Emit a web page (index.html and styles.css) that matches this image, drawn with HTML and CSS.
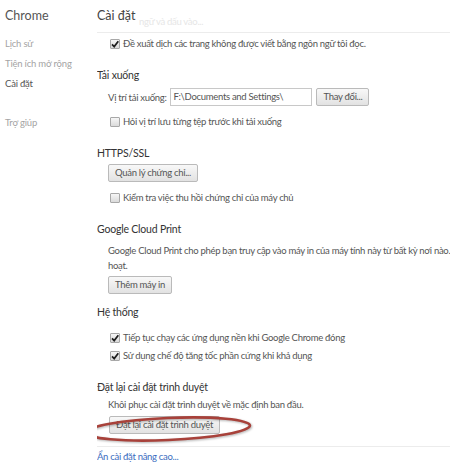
FILE: index.html
```html
<!DOCTYPE html>
<html lang="vi">
<head>
    <meta charset="UTF-8">
    <meta name="viewport" content="width=device-width, initial-scale=1.0">
    <title>Cài đặt</title>
    <link rel="stylesheet" href="styles.css">
</head>
<body>
    <div class="page">
        <nav class="sidebar">
            <h1 class="brand">Chrome</h1>
            <ul class="nav-list">
                <li>Lịch sử</li>
                <li>Tiện ích mở rộng</li>
                <li class="active">Cài đặt</li>
                <li class="nav-help">Trợ giúp</li>
            </ul>
        </nav>
        <main class="main">
            <header class="main-header">
                <span class="ghost">ngữ và dấu vào...</span>
                <h2 class="title">Cài đặt</h2>
            </header>
            <div class="content">
                <div class="indent">
                    <label class="check-row first-row">
                        <span class="box checked"><svg viewBox="0 0 10 10"><path d="M2 5.3 L4.2 7.6 L8.3 2.2"/></svg></span>
                        Đề xuất dịch các trang không được viết bằng ngôn ngữ tôi đọc.
                    </label>
                </div>

                <section class="section">
                    <h3>Tải xuống</h3>
                    <div class="indent">
                        <div class="location-row">
                            <span>Vị trí tải xuống:</span>
                            <div class="path-input">F:\Documents and Settings\</div>
                            <button type="button" class="btn">Thay đổi...</button>
                        </div>
                        <label class="check-row spaced">
                            <span class="box"></span>
                            Hỏi vị trí lưu từng tệp trước khi tải xuống
                        </label>
                    </div>
                </section>

                <section class="section">
                    <h3>HTTPS/SSL</h3>
                    <div class="indent">
                        <button type="button" class="btn btn-top">Quản lý chứng chỉ...</button>
                        <label class="check-row spaced">
                            <span class="box"></span>
                            Kiểm tra việc thu hồi chứng chỉ của máy chủ
                        </label>
                    </div>
                </section>

                <section class="section">
                    <h3>Google Cloud Print</h3>
                    <div class="indent">
                        <p class="desc">Google Cloud Print cho phép bạn truy cập vào máy in của máy tính này từ bất kỳ nơi nào.<br>hoạt.</p>
                        <button type="button" class="btn btn-after-text">Thêm máy in</button>
                    </div>
                </section>

                <section class="section section-after-btn">
                    <h3>Hệ thống</h3>
                    <div class="indent">
                        <label class="check-row system-first">
                            <span class="box checked"><svg viewBox="0 0 10 10"><path d="M2 5.3 L4.2 7.6 L8.3 2.2"/></svg></span>
                            Tiếp tục chạy các ứng dụng nền khi Google Chrome đóng
                        </label>
                        <label class="check-row tight">
                            <span class="box checked"><svg viewBox="0 0 10 10"><path d="M2 5.3 L4.2 7.6 L8.3 2.2"/></svg></span>
                            Sử dụng chế độ tăng tốc phần cứng khi khả dụng
                        </label>
                    </div>
                </section>

                <section class="section reset">
                    <h3>Đặt lại cài đặt trình duyệt</h3>
                    <div class="indent">
                        <p class="reset-text">Khôi phục cài đặt trình duyệt về mặc định ban đầu.</p>
                        <button type="button" class="btn btn-reset">Đặt lại cài đặt trình duyệt</button>
                    </div>
                    <svg class="circle-mark" viewBox="0 0 186 34">
                        <ellipse cx="93" cy="17" rx="82" ry="11" transform="rotate(-2.5 93 17)"/>
                    </svg>
                </section>

                <div class="footer">
                    <a href="#" class="more-link">Ẩn cài đặt nâng cao...</a>
                </div>
            </div>
        </main>
    </div>
</body>
</html>
```

FILE: styles.css
```css
body {
    margin: 0;
    background: #fff;
    color: #555;
    font-family: Lato, "Liberation Sans", sans-serif;
    font-size: 9.5px;
    letter-spacing: -0.3px;
    overflow: hidden;
}
.page {
    display: flex;
    width: 450px;
    height: 465px;
    overflow: hidden;
}
.sidebar {
    width: 92px;
    flex-shrink: 0;
    padding-left: 5px;
}
.brand {
    margin: 0;
    font-weight: normal;
    font-size: 12.5px;
    letter-spacing: 0;
    line-height: 32px;
    color: #555;
}
.nav-list {
    list-style: none;
    margin: 2px 0 0;
    padding: 0;
}
.nav-list li {
    font-size: 9.5px;
    letter-spacing: -0.2px;
    line-height: 20px;
    color: #a4a4a4;
}
.nav-list li.active {
    color: #555;
}
.nav-list li.nav-help {
    margin-top: 19px;
}
.main {
    flex: 1;
    min-width: 0;
    overflow: hidden;
}
.main-header {
    position: relative;
    height: 32px;
    border-bottom: 1px solid #ececec;
}
.title {
    position: relative;
    margin: 0;
    font-weight: normal;
    font-size: 12.5px;
    letter-spacing: 0;
    line-height: 32px;
    color: #444;
}
.ghost {
    position: absolute;
    left: 42px;
    top: 16px;
    color: #e6e6e6;
    white-space: nowrap;
}
.indent {
    padding-left: 11px;
}
.check-row {
    display: flex;
    align-items: center;
    gap: 3px;
    line-height: 15px;
    white-space: nowrap;
}
.first-row {
    padding-top: 3px;
}
.check-row.spaced {
    margin-top: 8px;
}
.check-row.system-first {
    margin-top: 9px;
}
.check-row.tight {
    margin-top: 3px;
}
.box {
    box-sizing: border-box;
    width: 10px;
    height: 10px;
    margin-left: 2px;
    border: 1px solid #a8a8a8;
    border-radius: 1px;
    background: linear-gradient(#f6f6f6, #dadada);
    display: flex;
}
.box svg {
    width: 10px;
    height: 10px;
    margin: -1px;
    fill: none;
    stroke: #1e1e1e;
    stroke-width: 1.7;
}
.section {
    margin-top: 15px;
}
.section-after-btn {
    margin-top: 9px;
}
.section h3 {
    margin: 0;
    font-weight: normal;
    font-size: 10.5px;
    letter-spacing: -0.2px;
    line-height: 18px;
    color: #333;
}
.location-row {
    display: flex;
    align-items: center;
    gap: 4px;
    margin-top: 4px;
    height: 18px;
}
.path-input {
    box-sizing: border-box;
    width: 142px;
    height: 18px;
    line-height: 16px;
    padding-left: 2px;
    border: 1px solid #c8c8c8;
    background: #fff;
    color: #555;
    white-space: nowrap;
}
.btn {
    display: block;
    box-sizing: border-box;
    height: 18px;
    padding: 0 6px;
    border: 1px solid #bababa;
    border-radius: 2px;
    background: linear-gradient(#f8f8f8, #e2e2e2);
    color: #555;
    font-family: inherit;
    font-size: 9.5px;
    letter-spacing: -0.3px;
    line-height: 16px;
    white-space: nowrap;
}
.location-row .btn {
    display: inline-block;
}
.btn-top {
    margin-top: 2px;
}
.desc {
    margin: 5px 0 0;
    line-height: 15px;
    white-space: nowrap;
}
.btn-after-text {
    margin-top: 3px;
}
.reset {
    position: relative;
}
.reset-text {
    margin: 1px 0 0;
    line-height: 15px;
}
.btn-reset {
    margin-top: 4px;
    margin-left: 1px;
}
.circle-mark {
    position: absolute;
    left: -22px;
    top: 34px;
    width: 186px;
    height: 34px;
    fill: none;
    stroke: #a8413a;
    stroke-width: 2.6;
    filter: drop-shadow(1px 1.5px 1px rgba(0, 0, 0, 0.3));
}
.footer {
    margin-top: 12px;
    border-top: 1px solid #ececec;
    padding-top: 2px;
}
.more-link {
    line-height: 15px;
    color: #3a6cc0;
    text-decoration: none;
}
```
